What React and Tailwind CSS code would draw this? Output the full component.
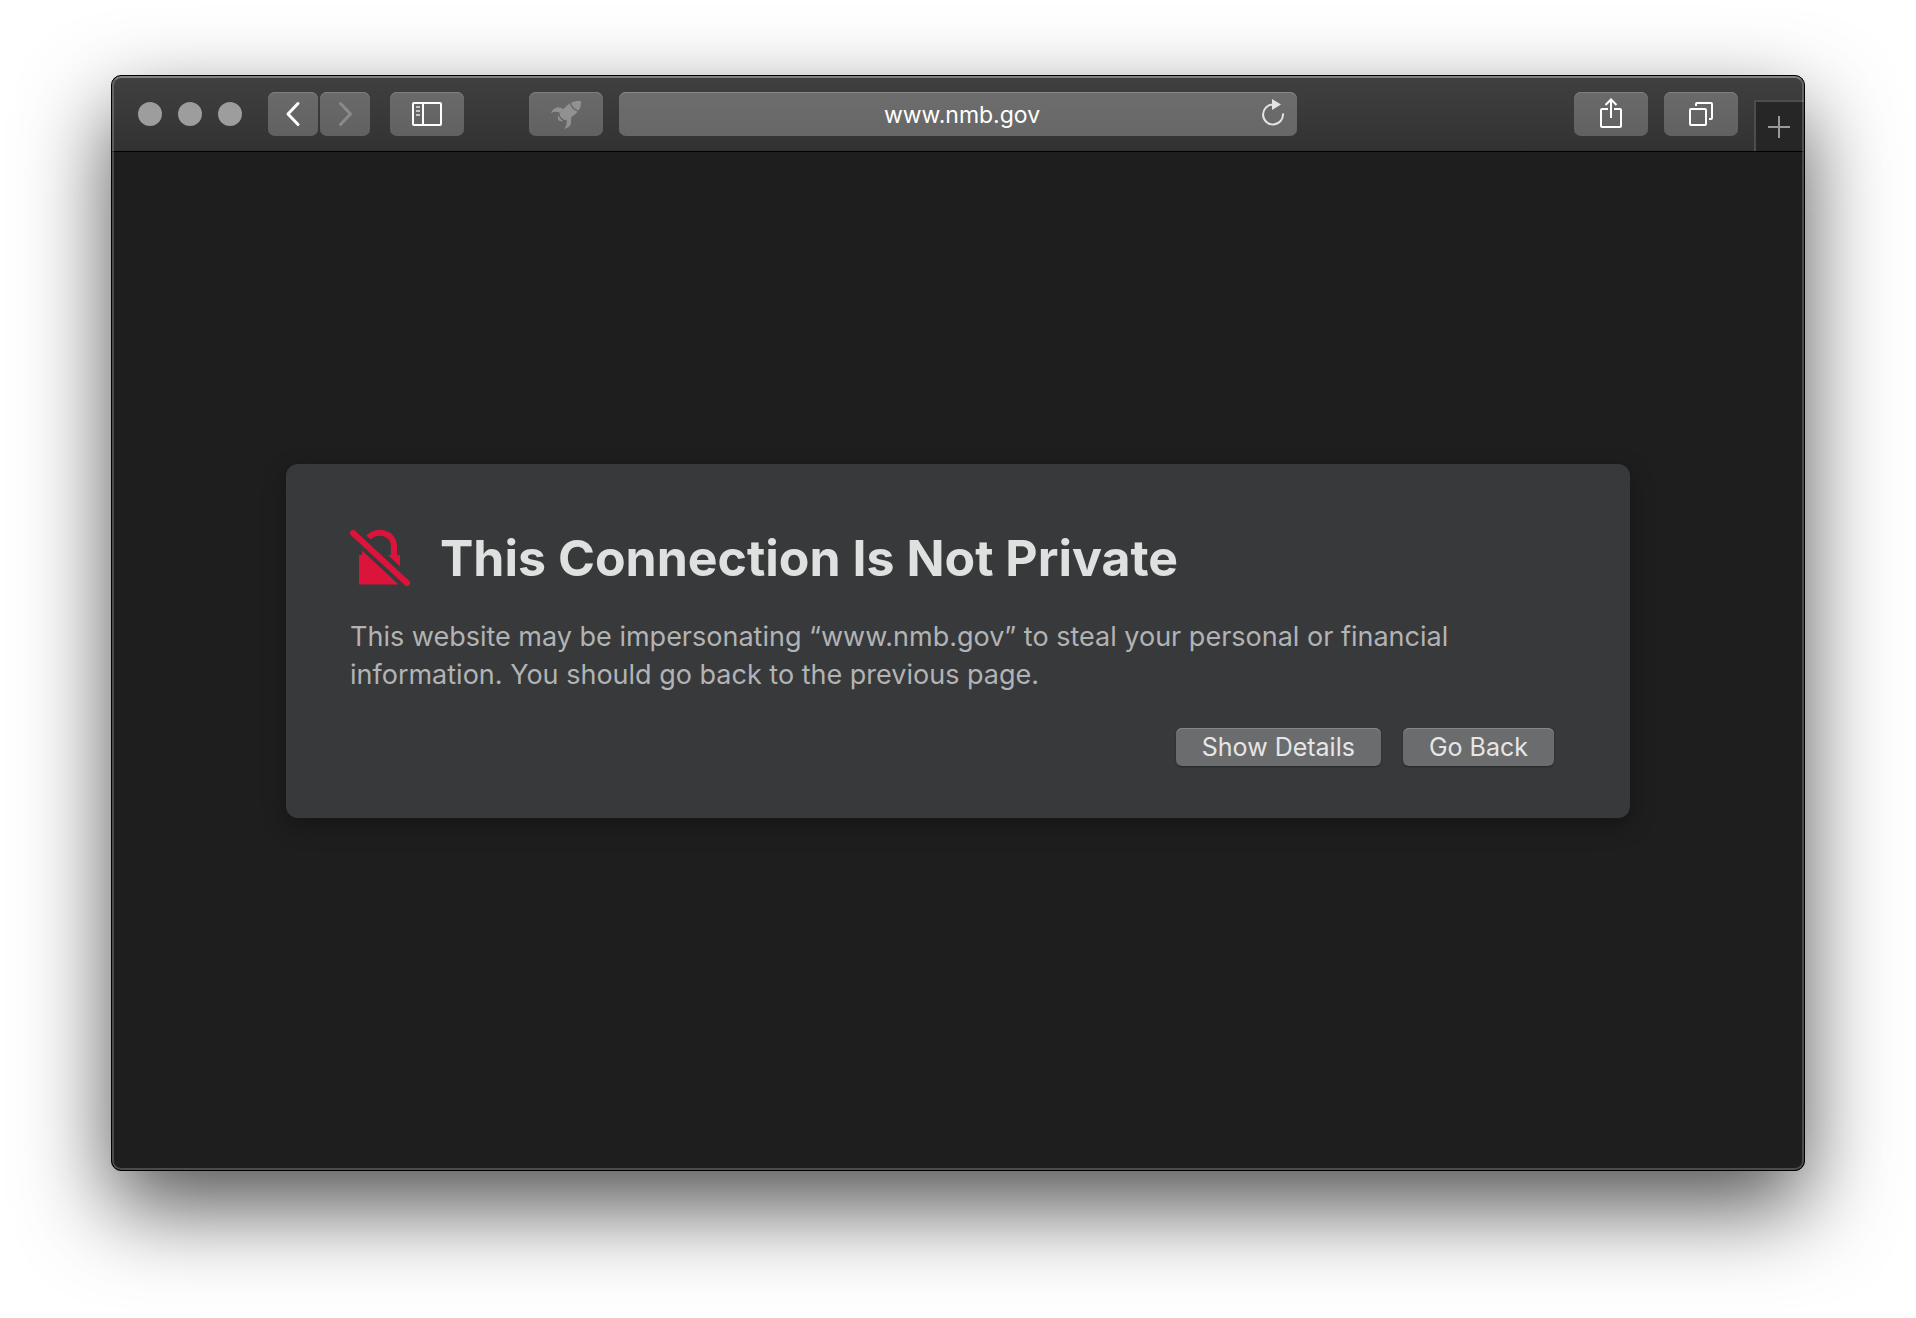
const toolButton =
  "flex h-11 shrink-0 items-center justify-center rounded-[7px] bg-linear-to-b from-[#6a6a6a] to-[#616161] shadow-[inset_0_1px_0_#7f7f7f]";

function ToolButton({ label, narrow, disabled, children }) {
  return (
    <button
      type="button"
      aria-label={label}
      disabled={disabled}
      className={`${toolButton} ${narrow ? "w-[50px]" : "w-[74px]"}`}
    >
      <svg
        viewBox={narrow ? "0 0 50 44" : "0 0 74 44"}
        className="h-11 w-full"
        fill="none"
        stroke="white"
        strokeWidth="2"
        aria-hidden="true"
      >
        {children}
      </svg>
    </button>
  );
}

function Toolbar() {
  return (
    <header className="grid h-[76px] grid-cols-[1fr_minmax(0,678px)_1fr] border-b border-black bg-linear-to-b from-[#404040] to-[#323232]">
      <div className="flex items-center pr-4 pl-[26px]">
        <div className="flex gap-4">
          <button type="button" aria-label="Close" className="size-6 rounded-full bg-[#9d9d9d]" />
          <button type="button" aria-label="Minimize" className="size-6 rounded-full bg-[#9d9d9d]" />
          <button type="button" aria-label="Zoom" className="size-6 rounded-full bg-[#9d9d9d]" />
        </div>
        <div className="ml-[26px] flex gap-0.5">
          <ToolButton label="Back" narrow>
            <path d="M30 11.5 20 22l10 10.5" strokeWidth="3" strokeLinecap="round" strokeLinejoin="round" />
          </ToolButton>
          <ToolButton label="Forward" narrow disabled>
            <path d="M20.5 11.5 30.5 22l-10 10.5" stroke="#8a8a8a" strokeWidth="3" strokeLinecap="round" strokeLinejoin="round" />
          </ToolButton>
        </div>
        <div className="ml-5 flex">
          <ToolButton label="Show sidebar">
            <rect x="23" y="11" width="28" height="22" rx="1" />
            <path d="M33 11v22" />
            <path d="M26 15h4M26 19h4M26 23h4" stroke="#c4c4c4" />
          </ToolButton>
        </div>
        <div className="ml-auto flex">
          <ToolButton label="Rocket extension" disabled>
            <g fill="#919191" stroke="none">
              <path d="M52 9.200c-3.500-.6-6.800-.2-9.800 1.300.6 3.900 3.500 7 7.500 7.900 1.900-2.700 2.700-5.800 2.300-9.200Z" />
              <path d="M41 11.200c-3.400 2.300-5.500 4.600-7.300 6.400l-3.200 4.400c.4 2.600 2.700 5.400 5.800 6.200 5-1.800 9.500-5 12.500-8.700-4-1.200-7-4.200-7.800-8.300Z" />
              <path d="M34.500 17.200c-2-1.100-4-1.900-6.200-1.900-3 .9-5.200 3-6.300 5.600 3-1.500 6.200-1.800 9.200.1Z" />
              <path d="M42 24.500c.3 3 .1 5.800-.5 8.500-1.500 2-3.600 3.300-6.200 4 2.100-2.900 2.900-6 2.200-9.800Z" />
              <path d="M29.500 23.500c-.9 1.500-1 3.300 0 4.700 1.400 1 3.200 1.200 4.900.7-2.400-1.200-4-3-4.900-5.400Z" />
            </g>
          </ToolButton>
        </div>
      </div>

      <div className="flex items-center">
        <div className="flex h-11 w-full items-center rounded-[7px] bg-linear-to-b from-[#6d6d6d] to-[#676767] pl-14 shadow-[inset_0_1px_0_#878787]">
          <input
            type="text"
            aria-label="Address"
            defaultValue="www.nmb.gov"
            className="min-w-0 flex-1 bg-transparent pt-0.5 text-center text-[23px] leading-8 text-white outline-none"
          />
          <button type="button" aria-label="Reload" className="flex size-12 shrink-0 items-center justify-center">
            <svg viewBox="0 1 32 32" className="size-8" aria-hidden="true">
              <path d="M26 16.500A10 10 0 1 1 16 7.500" fill="none" stroke="#e4e4e4" strokeWidth="2" />
              <path d="M15 2v11l9-5.500Z" fill="#e4e4e4" />
            </svg>
          </button>
        </div>
      </div>

      <div className="flex items-center justify-end gap-4">
        <ToolButton label="Share">
          <path d="M34 17h-6q-1 0-1 1v16q0 1 1 1h18q1 0 1-1V18q0-1-1-1h-6M37 7.500V26M31.500 13 37 7.500l5.500 5.500" />
        </ToolButton>
        <ToolButton label="Show tab overview">
          <rect x="26" y="17" width="16" height="16" rx="1" />
          <path d="M32 14v-2q0-1 1-1h14q1 0 1 1v14q0 1-1 1h-2" />
        </ToolButton>
        <button
          type="button"
          aria-label="New tab"
          className="flex h-[51px] w-[50px] items-center justify-center self-end border-t-2 border-l-2 border-[#4d4d4d] bg-[#262626] pr-0.5"
        >
          <svg viewBox="0 0 22 22" className="size-[22px]" aria-hidden="true">
            <path d="M11 0v22M0 11h22" stroke="#999" strokeWidth="2" />
          </svg>
        </button>
      </div>
    </header>
  );
}

function InsecureIcon() {
  return (
    <svg viewBox="0 0 60 56" className="h-14 w-15 shrink-0" fill="#dc143c" aria-hidden="true">
      <path d="M9 25h3v-4.500L48.500 54.500H9Z" />
      <path d="M18.500 7.500C26-.5 44 1.500 44 17v9" fill="none" stroke="#dc143c" strokeWidth="6" />
      <path d="M38 25h12v11.500Z" />
      <path d="M3 3 57 53" stroke="#dc143c" strokeWidth="6" strokeLinecap="round" />
    </svg>
  );
}

const action =
  "h-[38px] rounded-md bg-[#6b6c6d] px-[26px] text-[25px] leading-9 text-[#e6e6e6] shadow-[inset_0_1px_0_#858687,0_1px_2px_rgba(0,0,0,0.35)]";

function Warning() {
  return (
    <section className="w-full max-w-[1344px] rounded-xl bg-[#38393b] pt-16 pr-[76px] pb-[52px] pl-16 shadow-[0_8px_24px_rgba(0,0,0,0.3)]">
      <div className="flex items-center gap-[30px]">
        <InsecureIcon />
        <h1 className="text-[50px] leading-[60px] font-bold text-[#dfe0e0]">This Connection Is Not Private</h1>
      </div>
      <p className="mt-[30px] text-[27px] leading-[38px] text-[#b2b3b4]">
        This website may be impersonating “www.nmb.gov” to steal your personal or financial information. You
        should go back to the previous page.
      </p>
      <div className="mt-[34px] flex justify-end gap-[22px]">
        <button type="button" className={action}>Show Details</button>
        <button type="button" className={action}>Go Back</button>
      </div>
    </section>
  );
}

export default function App() {
  return (
    <div className="flex min-h-screen bg-white px-[111px] pt-[75px] pb-[147px] font-['Inter',sans-serif]">
      <div className="relative flex flex-1 flex-col overflow-hidden rounded-[10px] border border-black bg-[#1e1e1e] shadow-[0_36px_88px_rgba(0,0,0,0.68)]">
        <Toolbar />
        <main className="flex flex-1 items-center justify-center px-6 pb-10">
          <Warning />
        </main>
        <div className="pointer-events-none absolute inset-0 rounded-[9px] border-2 border-white/20 border-t-white/35" />
      </div>
    </div>
  );
}
